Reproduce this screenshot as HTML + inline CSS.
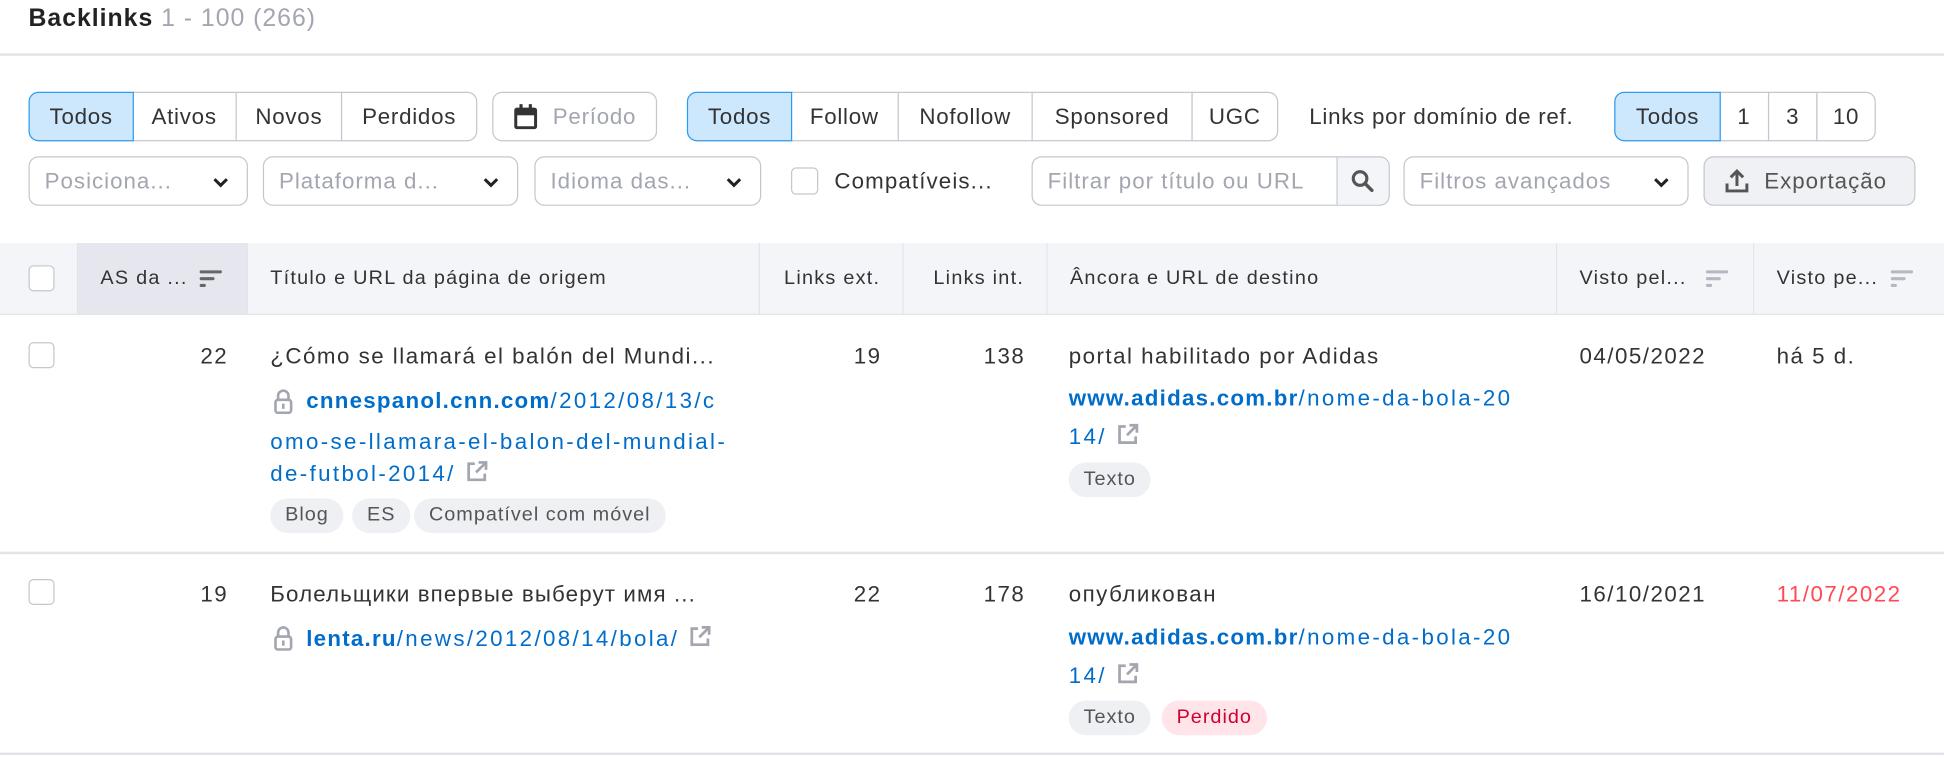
<!DOCTYPE html>
<html><head><meta charset="utf-8"><style>
html,body{margin:0;padding:0;background:#fff;width:1944px;height:757px;overflow:hidden}
#w{position:absolute;left:0;top:0;width:1568px;height:611px;transform:scale(1.2398);transform-origin:0 0;font-family:"Liberation Sans",Arial,sans-serif;color:#333;font-size:18px;letter-spacing:1.2px}
.a{position:absolute;white-space:nowrap}
.btn{position:absolute;top:74px;height:40px;box-sizing:border-box;border:1px solid #c4c7cf;display:flex;align-items:center;justify-content:center;font-size:18px;color:#333;background:#fff;letter-spacing:0.6px}
.sel{background:#cde7fd;border-color:#2d9bf0;z-index:2}
.in{position:absolute;top:126px;height:40px;box-sizing:border-box;border:1px solid #c4c7cf;border-radius:8px;display:flex;align-items:center;padding-left:12px;color:#a3a6b0;font-size:18px;background:#fff;letter-spacing:0.8px}
.chev{position:absolute;right:14px;top:13px}
.hd{position:absolute;top:196px;height:58px;background:#f4f5f9;display:flex;align-items:center;font-size:16px;color:#333;box-sizing:border-box;border-right:1px solid #e3e4ea;letter-spacing:1px}
.cb{position:absolute;width:21px;height:21px;border:1px solid #c4c7cf;border-radius:4px;box-sizing:border-box;background:#fff}
.lk{color:#006dca;letter-spacing:1.9px}
.lk b{font-weight:bold;letter-spacing:1px}
.tag{position:absolute;height:28px;line-height:28px;padding:0 12px;border-radius:14px;background:#eff0f3;color:#555;font-size:16px;letter-spacing:0.8px}
.line{position:absolute;left:0;width:1568px;height:2px;background:#e3e4ea}
</style></head><body><div id="w">
<div class="a" style="left:23px;top:4px;font-size:20px;font-weight:bold;color:#222;letter-spacing:0.8px">Backlinks <span style="font-weight:normal;color:#a3a6b0">1 - 100 (266)</span></div>
<div class="line" style="top:43px"></div>

<div class="btn sel" style="left:23px;width:85px;border-radius:8px 0 0 8px">Todos</div>
<div class="btn" style="left:107px;width:84px;border-left:none">Ativos</div>
<div class="btn" style="left:190px;width:86px">Novos</div>
<div class="btn" style="left:275px;width:110px;border-radius:0 8px 8px 0">Perdidos</div>
<div class="btn" style="left:397px;width:133px;border-radius:8px;color:#a3a6b0"><svg width="20" height="22" viewBox="0 0 20 22" style="margin-right:12px"><rect x="2" y="5" width="16" height="15" rx="1" fill="none" stroke="#333" stroke-width="2.4"/><rect x="2" y="5" width="16" height="5" fill="#333"/><rect x="5" y="1" width="2.5" height="6" fill="#333"/><rect x="12.5" y="1" width="2.5" height="6" fill="#333"/></svg>Período</div>

<div class="btn sel" style="left:554px;width:85px;border-radius:8px 0 0 8px">Todos</div>
<div class="btn" style="left:638px;width:87px;border-left:none">Follow</div>
<div class="btn" style="left:724px;width:109px">Nofollow</div>
<div class="btn" style="left:832px;width:130px">Sponsored</div>
<div class="btn" style="left:961px;width:70px;border-radius:0 8px 8px 0">UGC</div>
<div class="a" style="left:1056px;top:84px;letter-spacing:0.6px">Links por domínio de ref.</div>
<div class="btn sel" style="left:1302px;width:86px;border-radius:8px 0 0 8px">Todos</div>
<div class="btn" style="left:1387px;width:40px;border-left:none">1</div>
<div class="btn" style="left:1426px;width:40px">3</div>
<div class="btn" style="left:1465px;width:48px;border-radius:0 8px 8px 0">10</div>

<svg width="0" height="0" style="position:absolute"><defs><symbol id="cv" viewBox="0 0 14 14"><path d="M2 4.5 L7 9.5 L12 4.5" fill="none" stroke="#222" stroke-width="2.4"/></symbol></defs></svg>
<div class="in" style="left:23px;width:177px">Posiciona...<svg class="chev" width="14" height="14"><use href="#cv"/></svg></div>
<div class="in" style="left:212px;width:206px">Plataforma d...<svg class="chev" width="14" height="14"><use href="#cv"/></svg></div>
<div class="in" style="left:431px;width:183px">Idioma das...<svg class="chev" width="14" height="14"><use href="#cv"/></svg></div>
<div class="cb" style="left:638px;top:135px;width:22px;height:22px"></div>
<div class="a" style="left:673px;top:136px;letter-spacing:0.9px">Compatíveis...</div>
<div class="in" style="left:832px;width:289px">Filtrar por título ou URL<div style="position:absolute;right:0;top:0;width:41px;height:38px;border-left:1px solid #c4c7cf;background:#f4f5f9;border-radius:0 8px 8px 0"><svg width="20" height="20" viewBox="0 0 20 20" style="position:absolute;left:10px;top:9px"><circle cx="8" cy="8" r="5.5" fill="none" stroke="#555" stroke-width="2.5"/><path d="M12 12 L17.5 17.5" stroke="#555" stroke-width="2.8" stroke-linecap="round"/></svg></div></div>
<div class="in" style="left:1132px;width:230px">Filtros avançados<svg class="chev" width="14" height="14"><use href="#cv"/></svg></div>
<div class="in" style="left:1374px;width:171px;background:#f0f1f4;color:#555;padding-left:16px"><svg width="20" height="22" viewBox="0 0 20 22" style="margin-right:12px"><path d="M10 15 V3 M5 8 L10 3 L15 8" fill="none" stroke="#555" stroke-width="2.4"/><path d="M2 13 V19 H18 V13" fill="none" stroke="#555" stroke-width="2.4"/></svg>Exportação</div>

<div class="hd" style="left:0;width:63px"><div class="cb" style="left:23px;top:18px"></div></div>
<div class="hd" style="left:63px;width:137px;background:#e6e7ee;padding-left:18px">AS da ...<svg width="18" height="14" style="position:absolute;left:98px;top:22px"><rect x="0" y="0" width="18" height="2.5" rx="1" fill="#666"/><rect x="0" y="5.5" width="12" height="2.5" rx="1" fill="#666"/><rect x="0" y="11" width="5" height="2.5" rx="1" fill="#666"/></svg></div>
<div class="hd" style="left:200px;width:413px;padding-left:18px">Título e URL da página de origem</div>
<div class="hd" style="left:613px;width:116px;justify-content:flex-end;padding-right:18px">Links ext.</div>
<div class="hd" style="left:729px;width:116px;justify-content:flex-end;padding-right:18px">Links int.</div>
<div class="hd" style="left:845px;width:411px;padding-left:18px">Âncora e URL de destino</div>
<div class="hd" style="left:1256px;width:159px;padding-left:18px">Visto pel...<svg width="18" height="14" style="position:absolute;left:120px;top:22px"><rect x="0" y="0" width="18" height="2.5" rx="1" fill="#b5b8c2"/><rect x="0" y="5.5" width="12" height="2.5" rx="1" fill="#b5b8c2"/><rect x="0" y="11" width="5" height="2.5" rx="1" fill="#b5b8c2"/></svg></div>
<div class="hd" style="left:1415px;width:153px;padding-left:18px;border-right:none">Visto pe...<svg width="18" height="14" style="position:absolute;left:110px;top:22px"><rect x="0" y="0" width="18" height="2.5" rx="1" fill="#b5b8c2"/><rect x="0" y="5.5" width="12" height="2.5" rx="1" fill="#b5b8c2"/><rect x="0" y="11" width="5" height="2.5" rx="1" fill="#b5b8c2"/></svg></div>
<div class="line" style="top:253px;height:1px"></div>

<svg width="0" height="0" style="position:absolute"><defs>
<symbol id="lock" viewBox="0 0 16 20"><path d="M4 9 V6 a4 4 0 0 1 8 0 V9" fill="none" stroke="#a3a6b0" stroke-width="2"/><rect x="2" y="9" width="12" height="10" rx="2" fill="none" stroke="#a3a6b0" stroke-width="2"/><rect x="7" y="12" width="2" height="4" fill="#a3a6b0"/></symbol>
<symbol id="ext" viewBox="0 0 20 20"><path d="M8 4 H3 V17 H16 V12" fill="none" stroke="#a3a6b0" stroke-width="2.2"/><path d="M9 11 L17 3 M11 3 H17 V9" fill="none" stroke="#a3a6b0" stroke-width="2.2"/></symbol>
</defs></svg>

<!-- row 1 -->
<div class="cb" style="left:23px;top:276px"></div>
<div class="a" style="left:120px;width:64px;text-align:right;top:277px">22</div>
<div class="a" style="left:218px;top:277px">¿Cómo se llamará el balón del Mundi...</div>
<svg class="a" style="left:220px;top:313px" width="17" height="21"><use href="#lock"/></svg>
<div class="a lk" style="left:247px;top:313px"><b>cnnespanol.cnn.com</b>/2012/08/13/c</div>
<div class="a lk" style="left:218px;top:346px">omo-se-llamara-el-balon-del-mundial-</div>
<div class="a lk" style="left:218px;top:370px">de-futbol-2014/ <svg width="20" height="20" style="vertical-align:-2px"><use href="#ext"/></svg></div>
<div class="tag" style="left:218px;top:402px">Blog</div>
<div class="tag" style="left:284px;top:402px">ES</div>
<div class="tag" style="left:334px;top:402px">Compatível com móvel</div>
<div class="a" style="left:613px;width:98px;text-align:right;top:277px">19</div>
<div class="a" style="left:729px;width:98px;text-align:right;top:277px">138</div>
<div class="a" style="left:862px;top:277px">portal habilitado por Adidas</div>
<div class="a lk" style="left:862px;top:311px"><b>www.adidas.com.br</b>/nome-da-bola-20</div>
<div class="a lk" style="left:862px;top:340px">14/ <svg width="20" height="20" style="vertical-align:-2px"><use href="#ext"/></svg></div>
<div class="tag" style="left:862px;top:373px">Texto</div>
<div class="a" style="left:1274px;top:277px">04/05/2022</div>
<div class="a" style="left:1433px;top:277px">há 5 d.</div>
<div class="line" style="top:445px"></div>

<!-- row 2 -->
<div class="cb" style="left:23px;top:467px"></div>
<div class="a" style="left:120px;width:64px;text-align:right;top:469px">19</div>
<div class="a" style="left:218px;top:469px;letter-spacing:0.9px">Болельщики впервые выберут имя ...</div>
<svg class="a" style="left:220px;top:504px" width="17" height="21"><use href="#lock"/></svg>
<div class="a lk" style="left:247px;top:503px"><b>lenta.ru</b>/news/2012/08/14/bola/ <svg width="20" height="20" style="vertical-align:-2px"><use href="#ext"/></svg></div>
<div class="a" style="left:613px;width:98px;text-align:right;top:469px">22</div>
<div class="a" style="left:729px;width:98px;text-align:right;top:469px">178</div>
<div class="a" style="left:862px;top:469px">опубликован</div>
<div class="a lk" style="left:862px;top:504px"><b>www.adidas.com.br</b>/nome-da-bola-20</div>
<div class="a lk" style="left:862px;top:533px">14/ <svg width="20" height="20" style="vertical-align:-2px"><use href="#ext"/></svg></div>
<div class="tag" style="left:862px;top:565px">Texto</div>
<div class="tag" style="left:937px;top:565px;background:#ffe5ea;color:#d1002f">Perdido</div>
<div class="a" style="left:1274px;top:469px">16/10/2021</div>
<div class="a" style="left:1433px;top:469px;color:#ff4953">11/07/2022</div>
<div class="line" style="top:607px"></div>
</div></body></html>
